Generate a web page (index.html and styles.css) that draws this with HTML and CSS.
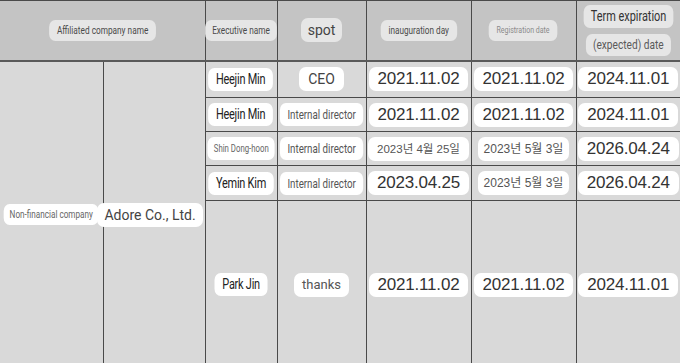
FILE: index.html
```html
<!DOCTYPE html>
<html lang="en">
<head>
  <meta charset="UTF-8" />
  <title>Executives of affiliated companies</title>
  <meta name="viewport" content="width=device-width, initial-scale=1.0"/>
  <link rel="stylesheet" href="styles.css">
</head>
<body>

  <table class="exec-table">
    <colgroup>
      <col class="col-type">
      <col class="col-company">
      <col class="col-name">
      <col class="col-spot">
      <col class="col-date">
      <col class="col-date">
      <col class="col-term">
    </colgroup>

    <thead>
      <tr>
        <th colspan="2"><span class="tag narrow head-affil">Affiliated company name</span></th>
        <th><span class="tag narrow head-exec">Executive name</span></th>
        <th><span class="tag head-spot">spot</span></th>
        <th><span class="tag narrow head-inaug">inauguration day</span></th>
        <th><span class="tag narrow head-reg">Registration date</span></th>
        <th>
          <div class="term-line first"><span class="tag narrow head-term">Term expiration</span></div>
          <div class="term-line"><span class="tag narrow head-term-sub">(expected) date</span></div>
        </th>
      </tr>
    </thead>

    <tbody>
      <tr class="row-a">
        <td rowspan="5"><span class="tag narrow cell-type">Non-financial company</span></td>
        <td rowspan="5"><span class="tag cell-company">Adore Co., Ltd.</span></td>
        <td><span class="tag narrow cell-name">Heejin Min</span></td>
        <td><span class="tag cell-spot">CEO</span></td>
        <td><span class="tag date">2021.11.02</span></td>
        <td><span class="tag date">2021.11.02</span></td>
        <td><span class="tag date">2024.11.01</span></td>
      </tr>
      <tr class="row-b">
        <td><span class="tag narrow cell-name">Heejin Min</span></td>
        <td><span class="tag narrow cell-role">Internal director</span></td>
        <td><span class="tag date">2021.11.02</span></td>
        <td><span class="tag date">2021.11.02</span></td>
        <td><span class="tag date">2024.11.01</span></td>
      </tr>
      <tr class="row-b">
        <td><span class="tag narrow cell-name small">Shin Dong-hoon</span></td>
        <td><span class="tag narrow cell-role">Internal director</span></td>
        <td><span class="tag date-kr">2023년 4월 25일</span></td>
        <td><span class="tag date-kr wide">2023년 5월 3일</span></td>
        <td><span class="tag date">2026.04.24</span></td>
      </tr>
      <tr class="row-c">
        <td><span class="tag narrow cell-name">Yemin Kim</span></td>
        <td><span class="tag narrow cell-role">Internal director</span></td>
        <td><span class="tag date">2023.04.25</span></td>
        <td><span class="tag date-kr wide">2023년 5월 3일</span></td>
        <td><span class="tag date">2026.04.24</span></td>
      </tr>
      <tr class="row-last">
        <td><span class="tag narrow cell-name">Park Jin</span></td>
        <td><span class="tag cell-spot thin">thanks</span></td>
        <td><span class="tag date">2021.11.02</span></td>
        <td><span class="tag date">2021.11.02</span></td>
        <td><span class="tag date">2024.11.01</span></td>
      </tr>
    </tbody>
  </table>

</body>
</html>
```

FILE: styles.css
```css
* {
  box-sizing: border-box;
}

body {
  margin: 0;
  font-family: Roboto, 'Liberation Sans', sans-serif;
  background-color: #d9d9d9;
  color: #333;
  height: 100vh;
  overflow: hidden;
}

/* TABLE GRID */
.exec-table {
  width: 680px;
  table-layout: fixed;
  border-collapse: collapse;
  border-top: 1px solid #555;
}

.col-type { width: 103px; }
.col-company { width: 102px; }
.col-name { width: 72px; }
.col-spot { width: 89px; }
.col-date { width: 105px; }
.col-term { width: 104px; }

th, td {
  padding: 0;
  text-align: center;
  vertical-align: middle;
  border: 1px solid #4a4a4a;
  font-weight: normal;
}

th:first-child, td:first-child { border-left: none; }
th:last-child, td:last-child { border-right: none; }

thead th {
  height: 60px;
  background-color: #c4c4c4;
  border-bottom: 2px solid #5a5a5a;
}

tbody td {
  background-color: #d9d9d9;
}

.row-a td { height: 37px; }
.row-b td { height: 34px; }
.row-c td { height: 35px; }
.row-last td { height: 168px; }

/* LABEL PILLS */
/* negative side margins keep wide pills centred in narrow cells */
.tag {
  display: inline-block;
  background-color: #fff;
  border-radius: 7px;
  white-space: nowrap;
  vertical-align: middle;
  margin: 0 -40px;
}

/* condensed face for the small labels */
.narrow {
  transform: scaleX(0.78);
  border-radius: 8px / 7px;
}

thead .tag {
  background-color: #e6e6e6;
  color: #4a4a4a;
  height: 21px;
  line-height: 21px;
}

.head-affil {
  font-size: 10.6px;
  padding: 0 10px;
}

.head-exec {
  font-size: 10.6px;
  padding: 0 9px;
}

thead .head-spot {
  font-size: 14px;
  color: #444;
  height: 24px;
  line-height: 24px;
  padding: 0 7px;
}

.head-inaug {
  font-size: 10.5px;
  padding: 0 10px;
}

thead .head-reg {
  font-size: 9px;
  color: #8a8a8a;
  padding: 0 10px;
}

.term-line {
  display: flex;
  justify-content: center;
}

.term-line.first {
  margin-bottom: 6px;
}

.term-line .tag {
  margin: 0;
}

thead .head-term {
  font-size: 14px;
  height: 23px;
  line-height: 23px;
  color: #333;
  padding: 0 9px;
}

thead .head-term-sub {
  font-size: 13px;
  height: 22px;
  line-height: 22px;
  color: #5a5a5a;
  padding: 0 9px;
}

.cell-type {
  font-size: 11px;
  color: #666;
  height: 21px;
  line-height: 21px;
  padding: 0 8px;
  transform: scaleX(0.74);
}

.cell-company {
  font-size: 14px;
  color: #444;
  height: 24px;
  line-height: 24px;
  padding: 0 7px;
  margin-left: -48px;
}

.cell-name {
  font-size: 14px;
  letter-spacing: -0.3px;
  color: #222;
  height: 23px;
  line-height: 23px;
  padding: 0 10px;
}

.cell-name.small {
  font-size: 10px;
  letter-spacing: 0;
  color: #666;
  padding: 0 8px;
}

.cell-spot {
  font-size: 14px;
  color: #444;
  height: 24px;
  line-height: 24px;
  padding: 0 9px;
}

.cell-spot.thin {
  font-size: 13px;
  color: #555;
  padding: 0 8px;
}

.cell-role {
  font-size: 13px;
  color: #555;
  height: 23px;
  line-height: 23px;
  padding: 0 10px;
  transform: scaleX(0.75);
}

.date {
  font-family: 'Liberation Sans', sans-serif;
  font-size: 17px;
  letter-spacing: -0.2px;
  color: #333;
  height: 24px;
  line-height: 24px;
  padding: 0 9px;
}

.date-kr {
  font-family: 'Liberation Sans', 'Noto Sans CJK KR', sans-serif;
  font-size: 11.5px;
  color: #555;
  height: 24px;
  line-height: 24px;
  padding: 0 9px;
}

.date-kr.wide {
  font-size: 12px;
  padding: 0 6px;
}
```
